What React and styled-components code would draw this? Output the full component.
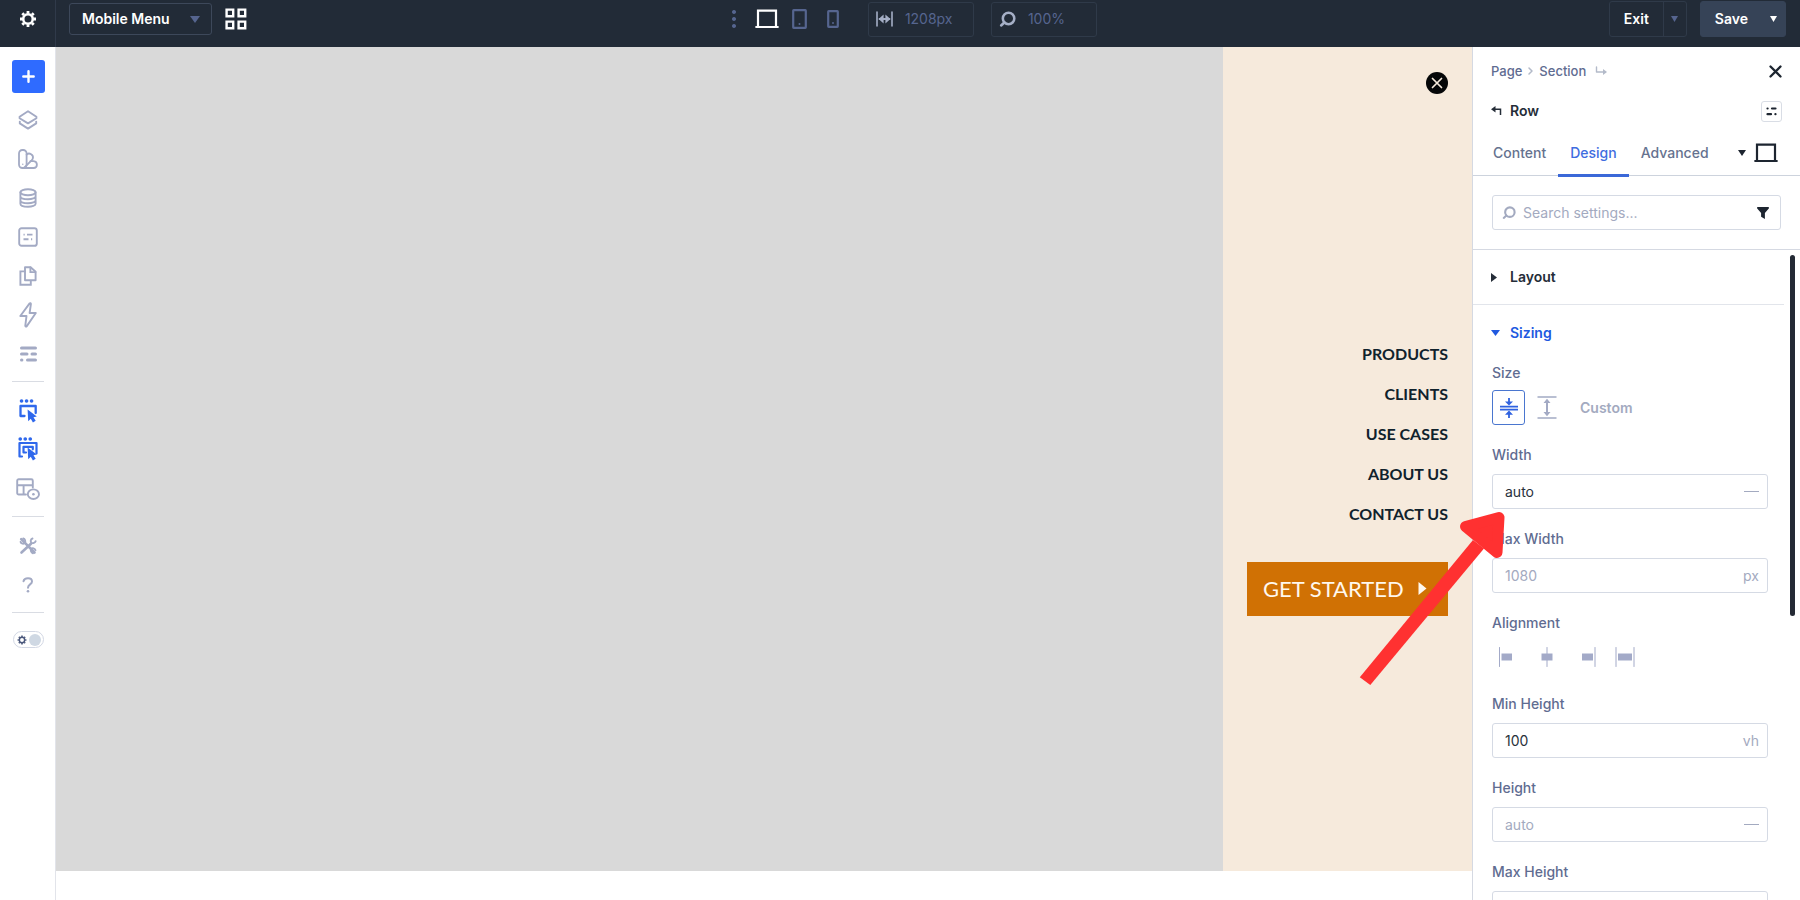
import React from 'react';
import styled, { createGlobalStyle } from 'styled-components';

const GlobalStyle = createGlobalStyle`
  *, *::before, *::after {
    box-sizing: border-box;
  }

  body {
    margin: 0;
    background: #fff;
    font-family: Inter, 'Liberation Sans', sans-serif;
    font-size: 14px;
    line-height: 18px;
  }

  button, input, select {
    font: inherit;
    color: inherit;
  }

  button {
    padding: 0;
    border: 0;
    background: none;
    cursor: pointer;
  }

  svg {
    display: block;
    flex: none;
  }
`;

const Builder = styled.div`
  position: relative;
  display: flex;
  flex-direction: column;
  height: 100vh;
  overflow: hidden;
`;

/* Top bar */

const TopBar = styled.header`
  display: flex;
  flex: none;
  justify-content: space-between;
  padding-right: 14px;
  background: #222b37; /* Dark Slate */
  color: #fff;
`;

const BarGroup = styled.div`
  display: flex;
  align-items: center;
  gap: ${({ $gap }) => $gap || 0}px;
  padding: 1px 0 10px;
`;

const CenterGroup = styled(BarGroup)`
  margin-right: 28px;
  color: #56658f;
`;

const LeftSide = styled.div`
  display: flex;
`;

const SettingsButton = styled.button`
  display: flex;
  justify-content: center;
  width: 56px;
  padding: 10px 0 0 1px;
  border-right: 1px solid #303a4a;
`;

const MenuPicker = styled.label`
  display: flex;
  align-items: center;
  width: 143px;
  height: 32px;
  margin-left: 13px;
  padding-right: 11px;
  border: 1px solid #3d485a;
  border-radius: 3px;
  color: #56658f;
`;

const MenuSelect = styled.select`
  flex: 1;
  min-width: 0;
  padding: 0 0 0 12px;
  border: 0;
  background: transparent;
  color: #fff;
  font-weight: 600;
  appearance: none;
  outline: none;
`;

const DeviceButton = styled.button`
  margin-right: ${({ $space }) => $space || 0}px;
  color: ${({ $active }) => ($active ? '#fff' : '#56658f')};
`;

const BarField = styled.label`
  display: flex;
  align-items: center;
  gap: 12px;
  width: 106px;
  height: 35px;
  margin-left: ${({ $offset }) => $offset || 0}px;
  padding: 0 8px 0 7px;
  border: 1px solid #2f3a49;
  border-radius: 3px;
  color: #a5afc6;
`;

const BarInput = styled.input`
  flex: 1;
  min-width: 0;
  padding: 0;
  border: 0;
  background: transparent;
  color: #56658f;
  outline: none;
`;

const SplitButton = styled.div`
  display: flex;
  height: 36px;
  border: 1px solid ${({ $solid }) => ($solid ? '#364357' : '#2f3a49')};
  border-radius: 3px;
  background: ${({ $solid }) => ($solid ? '#364357' : 'transparent')};
  font-weight: 600;
`;

const SplitMain = styled.button`
  padding: 0 14px;
`;

const SplitToggle = styled.button`
  display: flex;
  align-items: center;
  justify-content: center;
  width: 23px;
  border-left: 1px solid ${({ $line }) => $line || 'transparent'};
  color: ${({ $color }) => $color};
`;

/* Workspace */

const Workspace = styled.div`
  display: flex;
  flex: 1;
  min-height: 0;
`;

const Sidebar = styled.nav`
  display: flex;
  flex: none;
  flex-direction: column;
  align-items: center;
  width: 56px;
  padding: 13px 0 0 1px;
  border-right: 1px solid #e2e4ea;
`;

const AddButton = styled.button`
  display: flex;
  align-items: center;
  justify-content: center;
  width: 33px;
  height: 33px;
  margin-bottom: 7px;
  border-radius: 3px;
  background: #2f6bff;
  color: #fff;
`;

const SideButton = styled.button`
  display: flex;
  align-items: center;
  justify-content: center;
  width: 39px;
  height: 39px;
  color: ${({ $active }) => ($active ? '#2f68ec' : '#a3aac4')};
`;

const SideDivider = styled.hr`
  width: 32px;
  margin: 8px 0 9px;
  border: 0;
  border-top: 1px solid #d9dce3;
`;

const ThemeSwitch = styled.label`
  display: flex;
  align-items: center;
  justify-content: space-between;
  width: 31px;
  height: 17px;
  margin-top: 9px;
  padding: 0 2px 0 3px;
  border: 1px solid #d3d8e4;
  border-radius: 9px;
  color: #4b587c;
`;

const HiddenCheckbox = styled.input`
  position: absolute;
  opacity: 0;
  pointer-events: none;
`;

const Knob = styled.span`
  width: 12px;
  height: 12px;
  border-radius: 50%;
  background: #cfd8e3;
`;

const Stage = styled.main`
  display: flex;
  flex: 1;
  min-width: 0;
  padding-bottom: 29px;
`;

const Backdrop = styled.div`
  flex: 1;
  background: #d9d9d9;
`;

const MobileMenu = styled.aside`
  display: flex;
  flex-direction: column;
  width: 249px;
  padding: 25px 24px 16px;
  background: #f6eadc; /* Cream */
  color: #10222c;
  font-family: Lato, 'Liberation Sans', sans-serif;
`;

const CloseMenu = styled.button`
  display: flex;
  align-self: flex-end;
`;

const MenuBody = styled.div`
  margin: auto 0;
`;

const MenuLink = styled.a`
  display: block;
  color: inherit;
  font-size: 16px;
  font-weight: 700;
  line-height: 40px;
  text-align: right;
  text-decoration: none;
`;

const GetStarted = styled.a`
  display: flex;
  align-items: center;
  gap: 14px;
  height: 54px;
  margin-top: 28px;
  padding-left: 16px;
  background: #d07104; /* Burnt Orange */
  color: #fff8ee;
  font-size: 22px;
  line-height: 28px;
  text-decoration: none;
  white-space: nowrap;
`;

/* Settings panel */

const Panel = styled.aside`
  display: flex;
  flex: none;
  flex-direction: column;
  width: 328px;
  border-left: 1px solid #d5d9e2;
  color: #5f6c91;
`;

const PanelRow = styled.div`
  display: flex;
  align-items: center;
  justify-content: space-between;
  height: 40px;
  padding: 0 18px;
`;

const PanelHead = styled.div`
  padding-top: 4px;
`;

const Crumbs = styled.div`
  display: flex;
  align-items: center;
  gap: 6px;
  color: #b3bac9;
  font-size: 13px;
  font-weight: 500;
`;

const Crumb = styled.a`
  color: #5f6c91;
  text-decoration: none;
`;

const IconButton = styled.button`
  display: flex;
  color: ${({ $light }) => ($light ? '#fff' : '#1d2530')};
`;

const PanelTitle = styled.h2`
  display: flex;
  align-items: center;
  gap: 8px;
  margin: 0;
  color: #252d38;
  font-size: 14px;
  font-weight: 600;
`;

const LayoutButton = styled(IconButton)`
  align-items: center;
  justify-content: center;
  width: 21px;
  height: 21px;
  border: 1px solid #d9dde5;
  border-radius: 3px;
`;

const Tabs = styled.div`
  display: flex;
  align-items: stretch;
  height: 45px;
  padding: 0 22px 0 8px;
  border-bottom: 1px solid #cdd3dd;
`;

const Tab = styled.button`
  height: 46px;
  padding: 0 12px;
  border-bottom: 3px solid ${({ $active }) => ($active ? '#3b68d8' : 'transparent')};
  color: ${({ $active }) => ($active ? '#3f6ddf' : '#66728f')};
  font-weight: 500;
`;

const DevicePicker = styled.button`
  display: flex;
  align-items: center;
  gap: 8px;
  margin-left: auto;
  color: #1d2530;
`;

const SearchWrap = styled.div`
  padding: 19px 19px 19px;
  border-bottom: 1px solid #d5d9e2;
`;

const Box = styled.div`
  display: flex;
  align-items: center;
  gap: 7px;
  height: 35px;
  padding: 0 ${({ $end }) => $end || 8}px 0 ${({ $start }) => $start || 12}px;
  border: 1px solid #d5dae4;
  border-radius: 3px;
  color: #a3aac0;
`;

const BoxInput = styled.input`
  flex: 1;
  min-width: 0;
  padding: 0;
  border: 0;
  background: transparent;
  color: #2a313b;
  outline: none;

  &::placeholder {
    color: #a3aac0;
    opacity: 1;
  }
`;

const Unit = styled.span`
  color: #a3aac0;
`;

const AutoUnit = styled.span`
  width: 15px;
  border-top: 1px solid #a3aac0;
`;

const PanelBody = styled.div`
  display: flex;
  flex: 1;
  min-height: 0;
`;

const Groups = styled.div`
  flex: 1;
  overflow: hidden;
`;

const Scrollbar = styled.div`
  flex: none;
  width: 16px;
  padding: 5px 5px 0 6px;
`;

const Thumb = styled.div`
  width: 5px;
  height: 56%;
  border-radius: 3px;
  background: #242a35;
`;

const GroupToggle = styled.button`
  display: flex;
  align-items: center;
  gap: ${({ $open }) => ($open ? 10 : 13)}px;
  width: 100%;
  height: 55px;
  padding-left: 18px;
  border-bottom: ${({ $open }) => ($open ? 0 : '1px solid #e2e5eb')};
  color: ${({ $open }) => ($open ? '#2159df' : '#252d38')};
  font-weight: 600;
`;

const Fields = styled.div`
  padding: 4px 16px 0 19px;
`;

const Field = styled.div`
  display: flex;
  flex-direction: column;
  gap: ${({ $icons }) => ($icons ? 8 : 10)}px;
  margin-bottom: 21px;
`;

const FieldLabel = styled.label`
  align-self: flex-start;
  height: 18px;
  font-weight: 500;
`;

const SizeOptions = styled.div`
  display: flex;
  gap: 5px;
  height: 35px;
`;

const SizeOption = styled.button`
  display: flex;
  align-items: center;
  justify-content: center;
  width: 33px;
  border: 1px solid ${({ $active }) => ($active ? '#4a76cf' : 'transparent')};
  border-radius: 3px;
  color: ${({ $active }) => ($active ? '#2f62e0' : '#a3aac4')};
`;

const CustomOption = styled.button`
  padding: 0 12px;
  color: #a3aac0;
  font-weight: 600;
`;

const AlignOptions = styled.div`
  display: grid;
  grid-template-columns: repeat(4, 20px);
  align-items: center;
  gap: 19px;
  height: 34px;
  padding-left: 6px;
  color: #a3aac8;
`;

const AlignOption = styled.button`
  display: flex;
  justify-content: center;
`;

const Pointer = styled.svg`
  position: absolute;
  top: 505px;
  right: 285px;
  pointer-events: none;
`;

/* Icons */

const Icon = ({ w = 20, h = w, sw = 2, box, children }) => (
  <svg
    width={w}
    height={h}
    viewBox={box || `0 0 ${w} ${h}`}
    fill="none"
    stroke="currentColor"
    strokeWidth={sw}
    strokeLinejoin="round"
    strokeLinecap="round"
    aria-hidden="true"
  >
    {children}
  </svg>
);

const Fill = ({ d }) => <path d={d} fill="currentColor" stroke="none" />;

const CaretDown = ({ w = 8, h = 6 }) => (
  <Icon w={w} h={h}>
    <Fill d={`M0 0H${w}L${w / 2} ${h}Z`} />
  </Icon>
);

const GearIcon = ({ size = 18 }) => (
  <Icon w={size} box="0 0 18 18" sw={2.6}>
    <circle cx="9" cy="9" r="4.8" />
    <path
      d="M9 1v2.4M9 14.6V17M1 9h2.4M14.6 9H17M3.3 3.3L5 5M13 13l1.700 1.700M14.700 3.300L13 5M3.300 14.700L5 13"
      strokeLinecap="butt"
      strokeWidth="2.8"
    />
  </Icon>
);

const GridIcon = () => (
  <Icon w={22} sw={2.4}>
    <path d="M1.6 1.6h6.600v6.600H1.600zM13.600 1.600h6.600v6.600h-6.600zM1.600 13.600h6.600v6.600H1.600zM13.600 13.600h6.600v6.600h-6.600z" strokeLinejoin="miter" />
  </Icon>
);

const LaptopIcon = () => (
  <Icon w={24} h={20} sw={2.2}>
    <path d="M3 17.5V1.6h18v15.9" strokeLinejoin="miter" />
    <path d="M1.2 18h21.6" />
  </Icon>
);

const DeviceIcon = ({ w, h }) => (
  <Icon w={w} h={h} sw={2.2}>
    <rect x="1.2" y="1.2" width={w - 2.4} height={h - 2.4} rx="0.5" />
    <circle cx={w / 2} cy={h - 5} r="1" fill="currentColor" stroke="none" />
  </Icon>
);

const SearchIcon = ({ size = 16 }) => (
  <Icon w={size} box="0 0 16 16" sw={2.4}>
    <circle cx="9" cy="7" r="5.4" />
    <path d="M5 10.8L2 13.6" />
  </Icon>
);

const WidthIcon = () => (
  <Icon w={17} h={16}>
    <path d="M1 1v14M16 1v14" strokeWidth="1.6" />
    <path d="M3.6 8h9.8" />
    <Fill d="M2.6 8l5-4.4v8.8zM14.4 8l-5-4.4v8.8z" />
  </Icon>
);

const CursorShape = () => (
  <Fill d="M9.6 10.4l9.2 7.200-3.300.6 2.200 3.500-2.800 1.700-2.100-3.600-2.600 2.500z" />
);

const LayersIcon = () => (
  <Icon w={20} sw={1.9}>
    <path d="M10 1.2l8.4 5.6v1.4L10 13.4 1.6 8.2V6.8z" />
    <path d="M1.8 11.6v1.8L10 18.6l8.2-5.2v-1.8" />
  </Icon>
);

const SwatchIcon = () => (
  <Icon w={20} sw={1.8}>
    <rect x="1" y="1" width="7.6" height="18" rx="3.4" />
    <path d="M8.6 5.6c2.600-2.600 7.400.2 6.200 3.800-.2.700-.6 1.200-1.200 1.900L6.500 18.300" />
    <path d="M12.400 12.200h3.200c4.400.4 4.400 6.800 0 6.800H5" />
    <circle cx="4.8" cy="15.2" r=".7" fill="currentColor" stroke="none" />
  </Icon>
);

const DatabaseIcon = () => (
  <Icon w={18} h={20} sw={1.9}>
    <ellipse cx="9" cy="4.2" rx="7.6" ry="3" />
    <path d="M1.4 4.2v11.600c0 1.800 3.400 3 7.600 3s7.600-1.200 7.600-3V4.200M1.400 8.300c0 1.800 3.400 3 7.600 3s7.600-1.200 7.600-3M1.400 12.200c0 1.800 3.400 3 7.600 3s7.600-1.200 7.600-3" />
  </Icon>
);

const FormIcon = () => (
  <Icon w={20} sw={1.9}>
    <rect x="1.2" y="1.2" width="17.6" height="17.6" rx="2.4" />
    <path d="M5.5 7.600h1.200M9 7.600h5.500M5.500 12.200H10.500M13 12.200h1.200" strokeLinecap="butt" />
  </Icon>
);

const PagesIcon = () => (
  <Icon w={18} h={20} sw={1.9}>
    <path d="M6 1.2h5.600l5 4.600v8.400H6z" />
    <path d="M11.400 1.500v4.600h5M6 5.400H1.400v13.300h10.400v-3.500" strokeLinejoin="miter" />
  </Icon>
);

const BoltIcon = () => (
  <Icon w={18} h={26} sw={1.9}>
    <path d="M10.600 1.400L1.300 14h6.200l-1.200 9.600c-.1 1 .9 1.300 1.500.5L16.800 11h-6.200l1.300-8.800c.1-1-.8-1.400-1.300-.8z" />
  </Icon>
);

const LinesIcon = () => (
  <Icon w={17} h={16} sw={3}>
    <path d="M1.500 2h14M1.500 8h5.500M12 8h3.500M1.500 14h.4M7.500 14h8" />
  </Icon>
);

const ClickIcon = () => (
  <Icon w={20} h={24}>
    <path d="M3.500 2h.1M8.500 2h.1M13.500 2h.1" strokeWidth="3.600" />
    <path d="M6.500 17H2.500V7h15.200v7" strokeWidth="2.300" />
    <CursorShape />
  </Icon>
);

const MultiClickIcon = () => (
  <Icon w={20} h={25} sw={2.2}>
    <path d="M2.200 2h.1M7.200 2h.1M12.200 2h.1" strokeWidth="3.600" />
    <path d="M4 19.500H1.500V6h17v10.500" />
    <path d="M8 15.500H5.500V9.800h9.300v2.500" />
    <CursorShape />
  </Icon>
);

const PreviewIcon = () => (
  <Icon w={24} h={22} sw={1.9}>
    <path d="M10 16.500H2.700c-.8 0-1.500-.6-1.500-1.500V2.700c0-.9.700-1.500 1.500-1.500h12.600c.8 0 1.500.6 1.500 1.500v6.800M1.200 7.300h15.600M7.600 7.300v9" />
    <ellipse cx="17.400" cy="16.200" rx="5.600" ry="4.800" />
    <circle cx="17.400" cy="16.200" r="1.300" fill="currentColor" stroke="none" />
  </Icon>
);

const ToolsIcon = () => (
  <Icon w={18} sw={2.6}>
    <path d="M2.200 2.200L15.500 15.500M2.500 15.500l9.700-9" />
    <path d="M1.500 4.800c.5 2 3.300 2.500 4.300 1.200C7 4.400 6 2 4.200 1.500M16.500 13.200c-.5-2-3.300-2.500-4.300-1.200-1 1.400 0 3.700 1.800 4.300M13.500 1.500c-2 .5-2.300 3.300-1 4.200 1.400.8 3.700.4 4.200-1.600" strokeWidth="1.900" />
  </Icon>
);

const HelpIcon = () => (
  <Icon w={12} h={16} sw={2}>
    <path d="M1.500 4.200C2.400.3 10 .2 10 4.500c0 3-4 2.800-4 6.200" />
    <circle cx="6" cy="14.300" r="1.300" fill="currentColor" stroke="none" />
  </Icon>
);

const FitIcon = () => (
  <Icon w={20} h={22} sw={1.8}>
    <path d="M1 9.600h18M1 12.600h18M10 1v4M10 21v-4" strokeLinecap="butt" />
    <Fill d="M6 4.400h8l-4 4.200zM6 17.700h8l-4-4.200z" />
  </Icon>
);

const FillIcon = () => (
  <Icon w={20} h={23} sw={1.5}>
    <path d="M.5 1h19M.5 22h19" strokeLinecap="butt" />
    <path d="M10 5v13" strokeWidth="2" />
    <Fill d="M6.500 7L10 2.800 13.500 7zM6.500 16l3.500 4.200 3.500-4.200z" />
  </Icon>
);

const alignDrawings = {
  left: { line: 'M1.500 .5v19', bar: 'M3.500 6.500h10.500v7H3.500z' },
  center: { line: 'M10 .5v19', bar: 'M4.500 6.500h11v7h-11z' },
  right: { line: 'M19 .5v19', bar: 'M6 6.500h11v7H6z' },
  stretch: { line: 'M1 .5v19M19 .5v19', bar: 'M3 6.500h14v7H3z' },
};

const AlignIcon = ({ kind }) => (
  <Icon w={20} sw={1}>
    <path d={alignDrawings[kind].line} />
    <Fill d={alignDrawings[kind].bar} />
  </Icon>
);

const sideTools = [
  { name: 'Layers', icon: <LayersIcon /> },
  { name: 'Presets', icon: <SwatchIcon /> },
  { name: 'Variables', icon: <DatabaseIcon /> },
  { name: 'Page settings', icon: <FormIcon /> },
  { name: 'Pages', icon: <PagesIcon /> },
  { name: 'Interactions', icon: <BoltIcon /> },
  { name: 'Wireframe', icon: <LinesIcon /> },
];

const menuLinks = ['PRODUCTS', 'CLIENTS', 'USE CASES', 'ABOUT US', 'CONTACT US'];

const SizeField = ({ id, label, value, placeholder, unit }) => (
  <Field>
    <FieldLabel htmlFor={id}>{label}</FieldLabel>
    <Box>
      <BoxInput id={id} defaultValue={value} placeholder={placeholder} />
      {unit ? <Unit>{unit}</Unit> : <AutoUnit />}
    </Box>
  </Field>
);

const Header = () => (
  <TopBar>
    <LeftSide>
      <SettingsButton aria-label="Settings">
        <GearIcon />
      </SettingsButton>
      <BarGroup $gap={13}>
        <MenuPicker>
          <MenuSelect aria-label="Layout">
            <option>Mobile Menu</option>
          </MenuSelect>
          <CaretDown w={10} h={7} />
        </MenuPicker>
        <IconButton aria-label="Views" $light>
          <GridIcon />
        </IconButton>
      </BarGroup>
    </LeftSide>

    <CenterGroup>
      <DeviceButton aria-label="More views" $space={18}>
        <Icon w={6} h={20}>
          <Fill d="M3 1a2 2 0 1 0 .01 0zM3 8a2 2 0 1 0 .01 0zM3 15a2 2 0 1 0 .01 0z" />
        </Icon>
      </DeviceButton>
      <DeviceButton aria-label="Desktop" $active $space={13}><LaptopIcon /></DeviceButton>
      <DeviceButton aria-label="Tablet" $space={20}><DeviceIcon w={15} h={20} /></DeviceButton>
      <DeviceButton aria-label="Phone" $space={29}><DeviceIcon w={12} h={18} /></DeviceButton>
      <BarField>
        <WidthIcon />
        <BarInput aria-label="Canvas width" defaultValue="1208px" />
      </BarField>
      <BarField $offset={17}>
        <SearchIcon size={17} />
        <BarInput aria-label="Zoom" defaultValue="100%" />
      </BarField>
    </CenterGroup>

    <BarGroup $gap={13}>
      <SplitButton>
        <SplitMain>Exit</SplitMain>
        <SplitToggle aria-label="Exit options" $line="#2f3a49" $color="#56658f"><CaretDown w={7} h={6} /></SplitToggle>
      </SplitButton>
      <SplitButton $solid>
        <SplitMain>Save</SplitMain>
        <SplitToggle aria-label="Save options" $color="#fff"><CaretDown w={7} h={6} /></SplitToggle>
      </SplitButton>
    </BarGroup>
  </TopBar>
);

const Settings = () => (
  <Panel>
    <PanelHead>
      <PanelRow>
        <Crumbs>
          <Crumb href="#page">Page</Crumb>
          <Icon w={5} h={8} sw={1.5}><path d="M1 1l3 3-3 3" /></Icon>
          <Crumb href="#section">Section</Crumb>
          <Icon w={16} h={10} sw={1.4}>
            <path d="M4.500 1v5H12" />
            <Fill d="M11 3L15 6l-4 3z" />
          </Icon>
        </Crumbs>
        <IconButton aria-label="Close panel">
          <Icon w={13} sw={2.3}><path d="M1.500 1.500l10 10M11.500 1.500l-10 10" /></Icon>
        </IconButton>
      </PanelRow>
      <PanelRow>
        <PanelTitle>
          <Icon w={11} h={10} sw={1.5}>
            <path d="M3 3.200h6.500V9" strokeLinejoin="miter" strokeLinecap="butt" />
            <Fill d="M0 3.200L4.500 0v6.400z" />
          </Icon>
          Row
        </PanelTitle>
        <LayoutButton aria-label="Row presets">
          <Icon w={11} h={9} sw={2.2}>
            <path d="M1.500 1.500h.1M6 1.500h3.500M1.500 7.200h3.500M9.400 7.200h.1" />
          </Icon>
        </LayoutButton>
      </PanelRow>
    </PanelHead>

    <Tabs role="tablist">
      <Tab role="tab">Content</Tab>
      <Tab role="tab" aria-selected="true" $active>Design</Tab>
      <Tab role="tab">Advanced</Tab>
      <DevicePicker aria-label="Device">
        <CaretDown w={8} h={6} />
        <LaptopIcon />
      </DevicePicker>
    </Tabs>

    <SearchWrap>
      <Box $start={9} $end={11}>
        <SearchIcon size={14} />
        <BoxInput aria-label="Search settings" placeholder="Search settings..." />
        <IconButton aria-label="Filter">
          <Icon w={12}><Fill d="M.8 0h10.400c.8 0 1 .9.600 1.400L7.900 6v6L4.100 9.700V6L.2 1.400C-.2.9 0 0 .8 0z" /></Icon>
        </IconButton>
      </Box>
    </SearchWrap>

    <PanelBody>
      <Groups>
        <GroupToggle aria-expanded="false">
          <Icon w={6} h={9}><Fill d="M0 0L6 4.500 0 9z" /></Icon>
          Layout
        </GroupToggle>
        <GroupToggle aria-expanded="true" $open>
          <CaretDown w={9} h={6} />
          Sizing
        </GroupToggle>
        <Fields>
          <Field $icons>
            <FieldLabel as="span">Size</FieldLabel>
            <SizeOptions role="group" aria-label="Size">
              <SizeOption aria-label="Fit" aria-pressed="true" $active><FitIcon /></SizeOption>
              <SizeOption aria-label="Fill"><FillIcon /></SizeOption>
              <CustomOption>Custom</CustomOption>
            </SizeOptions>
          </Field>
          <SizeField id="width" label="Width" value="auto" />
          <SizeField id="max-width" label="Max Width" placeholder="1080" unit="px" />
          <Field $icons>
            <FieldLabel as="span">Alignment</FieldLabel>
            <AlignOptions role="group" aria-label="Alignment">
              {Object.keys(alignDrawings).map((kind) => (
                <AlignOption key={kind} aria-label={kind}>
                  <AlignIcon kind={kind} />
                </AlignOption>
              ))}
            </AlignOptions>
          </Field>
          <SizeField id="min-height" label="Min Height" value="100" unit="vh" />
          <SizeField id="height" label="Height" placeholder="auto" />
          <SizeField id="max-height" label="Max Height" />
        </Fields>
      </Groups>
      <Scrollbar>
        <Thumb />
      </Scrollbar>
    </PanelBody>
  </Panel>
);

const App = () => {
  return (
    <>
      <GlobalStyle />
      <Builder>
        <Header />
        <Workspace>
          <Sidebar>
            <AddButton aria-label="Add">
              <Icon w={13} sw={2.4}><path d="M6.500 1.300v10.400M1.300 6.500h10.400" /></Icon>
            </AddButton>
            {sideTools.map(({ name, icon }) => (
              <SideButton key={name} aria-label={name}>{icon}</SideButton>
            ))}
            <SideDivider />
            <SideButton aria-label="Click mode" $active><ClickIcon /></SideButton>
            <SideButton aria-label="Multi click mode" $active><MultiClickIcon /></SideButton>
            <SideButton aria-label="Preview"><PreviewIcon /></SideButton>
            <SideDivider />
            <SideButton aria-label="Tools"><ToolsIcon /></SideButton>
            <SideButton aria-label="Help"><HelpIcon /></SideButton>
            <SideDivider />
            <ThemeSwitch>
              <HiddenCheckbox type="checkbox" aria-label="Dark theme" />
              <GearIcon size={10} />
              <Knob />
            </ThemeSwitch>
          </Sidebar>

          <Stage>
            <Backdrop />
            <MobileMenu>
              <CloseMenu aria-label="Close menu">
                <svg width="22" height="22" viewBox="0 0 22 22" aria-hidden="true">
                  <circle cx="11" cy="11" r="11" fill="#050708" />
                  <path d="M6.500 6.500l9 9M15.500 6.500l-9 9" stroke="#f6eadc" strokeWidth="1.700" strokeLinecap="round" />
                </svg>
              </CloseMenu>
              <MenuBody>
                {menuLinks.map((text) => (
                  <MenuLink key={text} href="#menu">{text}</MenuLink>
                ))}
                <GetStarted href="#start">
                  GET STARTED
                  <Icon w={9} h={13}><Fill d="M.5 0L8.500 6.500.5 13z" /></Icon>
                </GetStarted>
              </MenuBody>
            </MobileMenu>
          </Stage>

          <Settings />
        </Workspace>

        <Pointer width="160" height="190" viewBox="0 0 160 190" aria-hidden="true">
          <path d="M4.800 172.300L118 35l11 8.500L15.300 180z" fill="#ff3131" />
          <path d="M110.500 21.500L144 12.500 142 47.500z" fill="#ff3131" stroke="#ff3131" strokeWidth="11" strokeLinejoin="round" />
        </Pointer>
      </Builder>
    </>
  );
};

export default App;
